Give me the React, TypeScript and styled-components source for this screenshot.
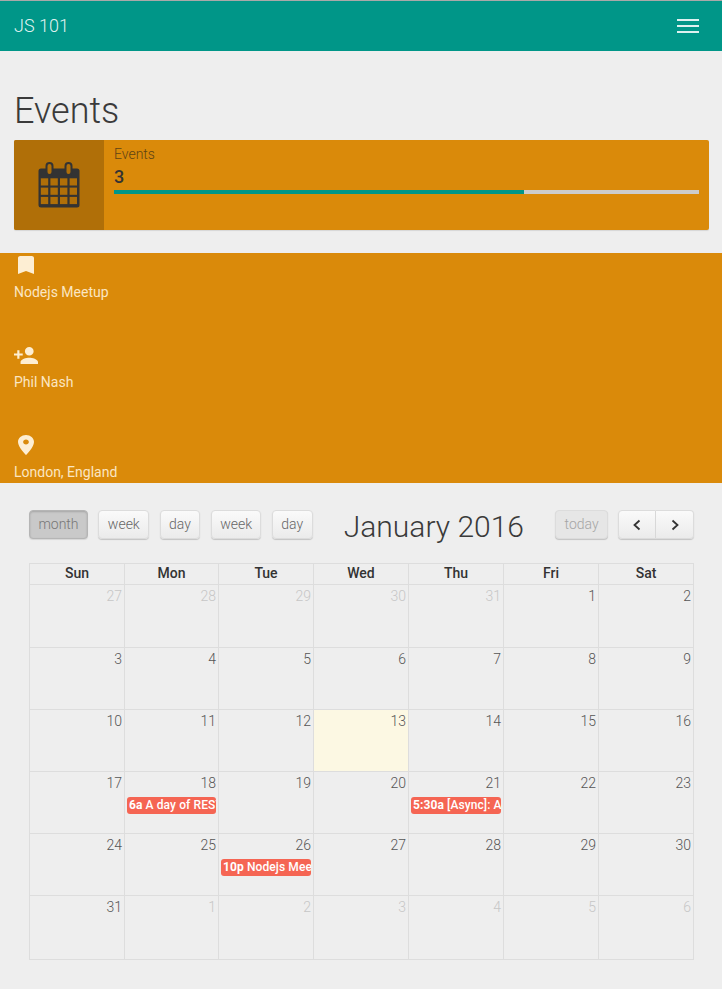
import React from "react";
import styled, { createGlobalStyle } from "styled-components";

const Global = createGlobalStyle`
  html, body { margin: 0; padding: 0; background: #eeeeee; }
  body { font-family: Roboto, "Liberation Sans", sans-serif; color: #333; overflow: hidden; }
  * { box-sizing: border-box; }
`;

const Page = styled.div`
  width: 722px;
  height: 989px;
  overflow: hidden;
`;

const NavBar = styled.header`
  height: 51px;
  background: #009688;
  border-top: 1px solid #a9a9a9;
  display: flex;
  align-items: center;
  justify-content: space-between;
  padding: 0 23px 1px 14px;
`;

const Brand = styled.span`
  font-size: 18px;
  font-weight: 300;
  color: rgba(255, 255, 255, 0.9);
`;

const Burger = styled.div`
  width: 22px;
  display: flex;
  flex-direction: column;
  gap: 4px;
  & > i {
    display: block;
    height: 2px;
    background: rgba(255, 255, 255, 0.87);
  }
`;

const Title = styled.h1`
  margin: 0;
  padding: 40px 14px 0;
  height: 89px;
  font-size: 36px;
  line-height: 40px;
  font-weight: 300;
  color: #3a3a3a;
`;

const InfoBox = styled.section`
  margin: 0 13px 0 14px;
  height: 90px;
  display: flex;
  background: #da8a0a;
  border-radius: 2px;
  box-shadow: 0 1px 1px rgba(0, 0, 0, 0.1);
  overflow: hidden;
`;

const InfoIcon = styled.div`
  width: 90px;
  flex: none;
  background: #b06f08;
  display: flex;
  align-items: center;
  justify-content: center;
`;

const InfoBody = styled.div`
  flex: 1;
  padding: 6px 10px 0;
`;

const InfoLabel = styled.div`
  font-size: 14px;
  line-height: 16px;
  font-weight: 300;
  color: #5e4314;
`;

const InfoNumber = styled.div`
  font-size: 18px;
  line-height: 20px;
  margin-top: 5px;
  font-weight: 500;
  color: #333;
`;

const Progress = styled.div`
  height: 4px;
  margin-top: 3px;
  background: #cccccc;
`;

const ProgressFill = styled.div`
  height: 100%;
  background: #009688;
`;

const Band = styled.section`
  margin-top: 23px;
  height: 230px;
  background: #da8a0a;
  overflow: hidden;
`;

const BandItem = styled.div`
  height: 90px;
  padding: 0 14px;
`;

const IconSlot = styled.div`
  height: 30px;
  display: flex;
  align-items: flex-start;
`;

const BandGlyph = styled.svg<{ $left: number; $top: number }>`
  display: block;
  fill: #fdeed3;
  margin-left: ${(p) => p.$left}px;
  margin-top: ${(p) => p.$top}px;
`;

const BandText = styled.div`
  font-size: 14px;
  line-height: 20px;
  margin-top: -1px;
  color: #fbe6c2;
`;

const CalendarWrap = styled.section`
  padding: 27px 28px 0 29px;
`;

const Toolbar = styled.div`
  height: 29px;
  margin-bottom: 24px;
  display: flex;
  align-items: center;
`;

const ToolGroup = styled.div`
  display: flex;
  gap: 10.5px;
`;

const CalTitle = styled.h2`
  flex: 1;
  margin: 0;
  padding-top: 4px;
  text-align: center;
  font-size: 30px;
  font-weight: 300;
  line-height: 34px;
  color: #3a3a3a;
  white-space: nowrap;
`;

const Button = styled.button<{ $active?: boolean; $disabled?: boolean }>`
  height: 29px;
  padding: 0 8.4px 1px;
  font: 300 14px Roboto, sans-serif;
  color: ${(p) => (p.$disabled ? "#a5a5a5" : p.$active ? "#777" : "#666")};
  border: 1px solid ${(p) => (p.$active ? "#b5b5b5" : "#dcdcdc")};
  border-radius: 4px;
  background: ${(p) =>
    p.$active
      ? "#c9c9c9"
      : p.$disabled
      ? "#e6e6e6"
      : "linear-gradient(#fafafa, #ebebeb)"};
  box-shadow: ${(p) =>
    p.$active
      ? "inset 0 1px 2px rgba(0,0,0,0.18), 0 1px 1px rgba(0,0,0,0.1)"
      : "0 1px 1px rgba(0,0,0,0.18)"};
`;

const NavGroup = styled.div`
  display: flex;
  margin-left: 10px;
`;

const NavButton = styled.button<{ $side: "l" | "r" }>`
  width: 38px;
  height: 29px;
  padding: 0;
  display: flex;
  align-items: center;
  justify-content: center;
  border: 1px solid #dcdcdc;
  border-left-width: ${(p) => (p.$side === "r" ? 0 : 1)}px;
  border-radius: ${(p) => (p.$side === "l" ? "4px 0 0 4px" : "0 4px 4px 0")};
  background: linear-gradient(#fafafa, #ebebeb);
  box-shadow: 0 1px 1px rgba(0, 0, 0, 0.18);
`;

const Table = styled.table`
  width: 664px;
  table-layout: fixed;
  border-collapse: collapse;
`;

const Col = styled.col<{ $w: number }>`
  width: ${(p) => p.$w}px;
`;

const Th = styled.th`
  height: 21px;
  padding: 0 0 1px;
  border: 1px solid #dddddd;
  font-size: 14px;
  font-weight: 500;
  line-height: 19px;
  color: #333;
  text-align: center;
`;

const Td = styled.td<{ $today?: boolean }>`
  padding: 0;
  border: 1px solid #dddddd;
  vertical-align: top;
  background: ${(p) => (p.$today ? "#fcf8e3" : "transparent")};
`;

const Row = styled.tr<{ $h: number }>`
  height: ${(p) => p.$h}px;
`;

const DayNum = styled.div<{ $other?: boolean }>`
  font-size: 14px;
  line-height: 20px;
  font-weight: 300;
  padding: 1px 2px 0 0;
  text-align: right;
  color: ${(p) => (p.$other ? "#c6c6c6" : "#555")};
`;

const Event = styled.div`
  margin: 4px 2px 0 2px;
  height: 17px;
  line-height: 16px;
  font-size: 12px;
  font-weight: 500;
  letter-spacing: 0.1px;
  color: #fff;
  background: #f56553;
  border-radius: 3px;
  padding: 0 0 0 2px;
  overflow: hidden;
  white-space: nowrap;
  & > b {
    font-weight: 700;
  }
`;

const CalIcon = () => (
  <svg width="42" height="46" viewBox="0 0 42 46" fill="none">
    <rect x="0.500" y="6.500" width="41" height="39" rx="2.500" fill="#333" />
    <rect x="8.500" y="1" width="6" height="12" rx="3" fill="#b06f08" stroke="#333" strokeWidth="2" />
    <rect x="27.500" y="1" width="6" height="12" rx="3" fill="#b06f08" stroke="#333" strokeWidth="2" />
    {[0, 1, 2].map((r) =>
      [0, 1, 2, 3].map((c) => (
        <rect
          key={`${r}${c}`}
          x={2.8 + c * 9.6}
          y={16.3 + r * 9.3}
          width="7.400"
          height="7.200"
          fill="#b06f08"
        />
      ))
    )}
  </svg>
);

const Chevron = ({ right }: { right?: boolean }) => (
  <svg width="10" height="12" viewBox="0 0 10 12" fill="none">
    <path
      d={right ? "M2.500 1.500 7.500 6l-5 4.500" : "M7.500 1.500 2.500 6l5 4.500"}
      stroke="#333"
      strokeWidth="1.800"
    />
  </svg>
);

type Cell = { d: number; other?: boolean; today?: boolean; time?: string; ev?: string };
const o = (d: number): Cell => ({ d, other: true });
const n = (d: number): Cell => ({ d });

const rows: { h: number; cells: Cell[] }[] = [
  { h: 63, cells: [o(27), o(28), o(29), o(30), o(31), n(1), n(2)] },
  { h: 62, cells: [3, 4, 5, 6, 7, 8, 9].map(n) },
  { h: 62, cells: [n(10), n(11), n(12), { d: 13, today: true }, n(14), n(15), n(16)] },
  {
    h: 62,
    cells: [
      n(17),
      { d: 18, time: "6a", ev: "A day of REST" },
      n(19),
      n(20),
      { d: 21, time: "5:30a", ev: "[Async]: A" },
      n(22),
      n(23),
    ],
  },
  {
    h: 62,
    cells: [n(24), n(25), { d: 26, time: "10p", ev: "Nodejs Meetup" }, n(27), n(28), n(29), n(30)],
  },
  { h: 64, cells: [n(31), o(1), o(2), o(3), o(4), o(5), o(6)] },
];

const days = ["Sun", "Mon", "Tue", "Wed", "Thu", "Fri", "Sat"];
const colWidths = [95, 94, 95, 95, 95, 95, 95];

export default function App() {
  return (
    <Page>
      <Global />
      <NavBar>
        <Brand>JS 101</Brand>
        <Burger>
          <i />
          <i />
          <i />
        </Burger>
      </NavBar>
      <Title>Events</Title>
      <InfoBox>
        <InfoIcon>
          <CalIcon />
        </InfoIcon>
        <InfoBody>
          <InfoLabel>Events</InfoLabel>
          <InfoNumber>3</InfoNumber>
          <Progress>
            <ProgressFill style={{ width: "70%" }} />
          </Progress>
        </InfoBody>
      </InfoBox>
      <Band>
        <BandItem>
          <IconSlot>
            <BandGlyph $left={4} $top={3} width="16" height="18" viewBox="5 3 14 18" preserveAspectRatio="none">
              <path d="M17 3H7c-1.100 0-1.990.9-1.990 2L5 21l7-3 7 3V5c0-1.100-.9-2-2-2z" />
            </BandGlyph>
          </IconSlot>
          <BandText>Nodejs Meetup</BandText>
        </BandItem>
        <BandItem>
          <IconSlot>
            <BandGlyph $left={0} $top={4} width="24" height="17" viewBox="1 4 22 16" preserveAspectRatio="none">
              <path d="M15 12c2.210 0 4-1.790 4-4s-1.790-4-4-4-4 1.790-4 4 1.790 4 4 4zm-9-2V7H4v3H1v2h3v3h2v-3h3v-2H6zm9 4c-2.670 0-8 1.340-8 4v2h16v-2c0-2.660-5.330-4-8-4z" />
            </BandGlyph>
          </IconSlot>
          <BandText>Phil Nash</BandText>
        </BandItem>
        <BandItem>
          <IconSlot>
            <BandGlyph $left={4} $top={2} width="16" height="20" viewBox="5 2 14 20" preserveAspectRatio="none">
              <path d="M12 2C8.130 2 5 5.130 5 9c0 5.250 7 13 7 13s7-7.750 7-13c0-3.870-3.130-7-7-7zm0 9.500c-1.380 0-2.500-1.120-2.500-2.500s1.120-2.500 2.500-2.500 2.500 1.120 2.500 2.500-1.120 2.500-2.500 2.500z" />
            </BandGlyph>
          </IconSlot>
          <BandText>London, England</BandText>
        </BandItem>
      </Band>
      <CalendarWrap>
        <Toolbar>
          <ToolGroup>
            <Button $active>month</Button>
            <Button>week</Button>
            <Button>day</Button>
            <Button>week</Button>
            <Button>day</Button>
          </ToolGroup>
          <CalTitle>January 2016</CalTitle>
          <Button $disabled>today</Button>
          <NavGroup>
            <NavButton $side="l">
              <Chevron />
            </NavButton>
            <NavButton $side="r">
              <Chevron right />
            </NavButton>
          </NavGroup>
        </Toolbar>
        <Table>
          <colgroup>
            {colWidths.map((w, i) => (
              <Col key={i} $w={w} />
            ))}
          </colgroup>
          <thead>
            <tr>
              {days.map((d) => (
                <Th key={d}>{d}</Th>
              ))}
            </tr>
          </thead>
          <tbody>
            {rows.map((r, i) => (
              <Row key={i} $h={r.h}>
                {r.cells.map((c, j) => (
                  <Td key={j} $today={c.today}>
                    <DayNum $other={c.other}>{c.d}</DayNum>
                    {c.ev && (
                      <Event>
                        <b>{c.time}</b> {c.ev}
                      </Event>
                    )}
                  </Td>
                ))}
              </Row>
            ))}
          </tbody>
        </Table>
      </CalendarWrap>
    </Page>
  );
}
